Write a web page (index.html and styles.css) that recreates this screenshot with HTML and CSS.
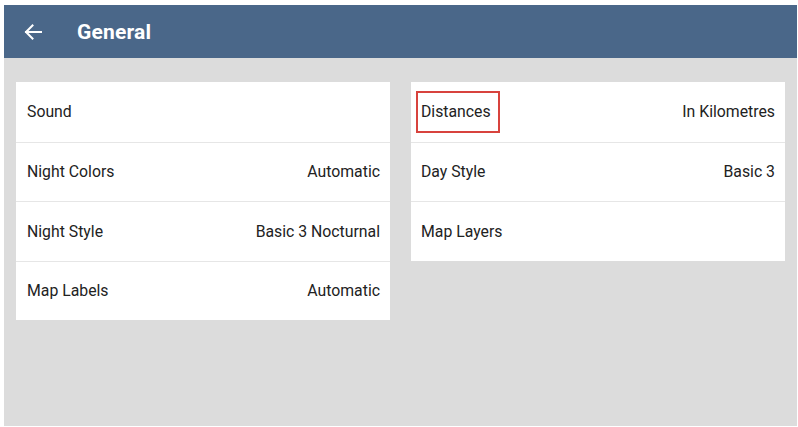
FILE: index.html
```html
<!DOCTYPE html>
<html>
<head>
<meta charset="utf-8">
<link rel="stylesheet" href="styles.css">
</head>
<body>
<div class="app">
  <header class="topbar">
    <svg class="back" width="18" height="16" viewBox="0 0 18 16"><path d="M17 8H2M8.5 1.5L2 8l6.5 6.5" fill="none" stroke="#fff" stroke-width="2" stroke-linecap="square"/></svg>
    <h1 class="title">General</h1>
  </header>
  <main class="content">
    <section class="card">
      <div class="row"><span class="label">Sound</span></div>
      <div class="row"><span class="label">Night Colors</span><span class="value">Automatic</span></div>
      <div class="row"><span class="label">Night Style</span><span class="value">Basic 3 Nocturnal</span></div>
      <div class="row"><span class="label">Map Labels</span><span class="value">Automatic</span></div>
    </section>
    <section class="card">
      <div class="row"><span class="label highlighted">Distances</span><span class="value">In Kilometres</span></div>
      <div class="row"><span class="label">Day Style</span><span class="value">Basic 3</span></div>
      <div class="row"><span class="label">Map Layers</span></div>
    </section>
  </main>
</div>
</body>
</html>
```
FILE: styles.css
```css
html, body {
  margin: 0;
  padding: 0;
  background: #ffffff;
}
body {
  font-family: Roboto, "Liberation Sans", sans-serif;
}
.app {
  margin: 5px 1px 1px 4px;
  width: 793px;
  height: 421px;
  display: flex;
  flex-direction: column;
  background: #dcdcdc;
}
.topbar {
  height: 53px;
  flex: none;
  background: #4a6789;
  display: flex;
  align-items: center;
  padding-left: 20px;
  box-sizing: border-box;
}
.back {
  display: block;
}
.title {
  margin: 0 0 0 35px;
  color: #ffffff;
  font-size: 21px;
  font-weight: 700;
  letter-spacing: 0.2px;
}
.content {
  flex: 1;
  display: grid;
  grid-template-columns: 374px 374px;
  column-gap: 21px;
  align-items: start;
  padding: 24px 12px 0 12px;
}
.card {
  background: #ffffff;
  display: flex;
  flex-direction: column;
}
.row {
  height: 59.5px;
  box-sizing: border-box;
  display: flex;
  align-items: center;
  justify-content: space-between;
  padding: 0 10px 0 11px;
  font-size: 15.8px;
  color: #222222;
}
.card + .card .row {
  padding-left: 10px;
}
.row + .row {
  border-top: 1px solid #e6e6e6;
}
.label {
  position: relative;
}
.highlighted::after {
  content: "";
  position: absolute;
  left: -5px;
  right: -9px;
  top: -11px;
  bottom: -12px;
  border: 2px solid #d8433d;
}
```
